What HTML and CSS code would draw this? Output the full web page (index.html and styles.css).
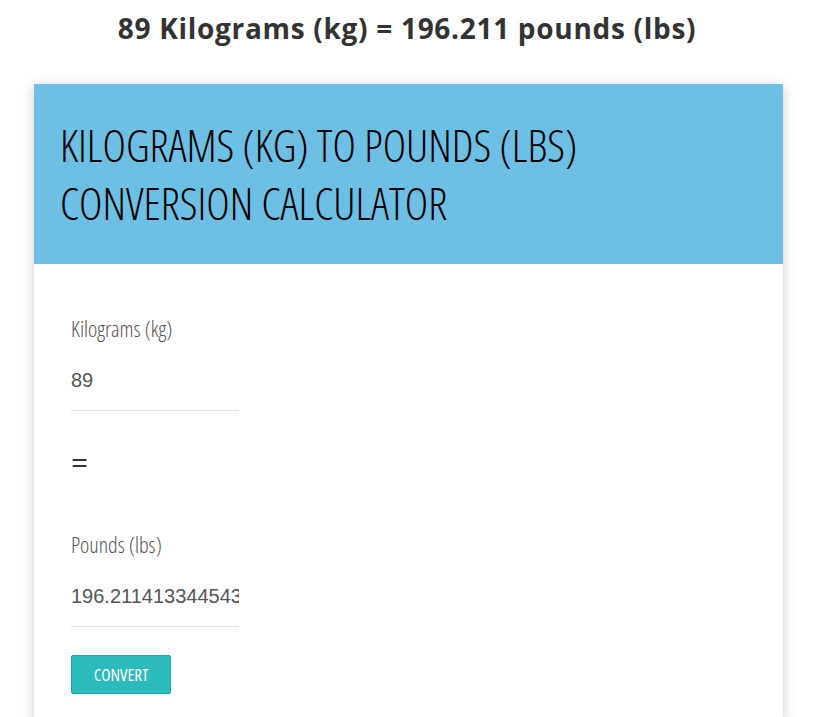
FILE: index.html
```html
<!DOCTYPE html>
<html lang="en">
<head>
  <meta charset="UTF-8">
  <meta name="viewport" content="width=device-width, initial-scale=1.0">
  <title>Kilograms to Pounds</title>
  <link rel="stylesheet" href="styles.css">
</head>
<body>
  <h2 class="result">89 Kilograms (kg) = 196.211 pounds (lbs)</h2>

  <div class="card">
    <div class="card-head">
      <h1>KILOGRAMS (KG) TO POUNDS (LBS) CONVERSION CALCULATOR</h1>
    </div>
    <div class="card-body">
      <div class="field">
        <label for="kg">Kilograms (kg)</label>
        <input id="kg" type="text" value="89">
      </div>
      <div class="equals">=</div>
      <div class="field">
        <label for="lbs">Pounds (lbs)</label>
        <input id="lbs" type="text" value="196.21141334454318">
      </div>
      <button class="btn">CONVERT</button>
    </div>
  </div>
</body>
</html>
```

FILE: styles.css
```css
body {
  margin: 0;
  background: #fff;
  font-family: "Open Sans", "Liberation Sans", sans-serif;
  color: #333;
}

.result {
  margin: 9px 0 0;
  text-align: center;
  font-family: "Open Sans", sans-serif;
  font-weight: 700;
  font-size: 28px;
  letter-spacing: 0.7px;
  line-height: 38px;
  color: #333;
}

.card {
  margin: 37px 31px 0 34px;
  background: #fff;
  box-shadow: 0 2px 12px rgba(0, 0, 0, 0.2);
}

.card-head {
  background: #6dbfe4;
  height: 180px;
  padding: 32px 26px 0;
  box-sizing: border-box;
}

.card-head h1 {
  margin: 0;
  max-width: 560px;
  font-family: "Open Sans", sans-serif;
  font-stretch: 75%;
  font-weight: 300;
  font-size: 44.5px;
  line-height: 58px;
  color: #000;
}

.card-body {
  padding: 49px 37px 30px;
}

.field label {
  display: block;
  font-family: "Open Sans", sans-serif;
  font-stretch: 75%;
  font-weight: 300;
  font-size: 22px;
  line-height: 30px;
  color: #555;
}

.field input {
  display: block;
  width: 168px;
  margin: 0;
  padding: 26px 0 18px;
  border: 0;
  border-bottom: 1px solid #ddd;
  font-family: "Liberation Sans", Arial, sans-serif;
  font-size: 20px;
  line-height: 23px;
  color: #555;
  outline: none;
}

.equals {
  margin: 36px 0 52px;
  font-family: "Open Sans", sans-serif;
  font-size: 30px;
  line-height: 30px;
  color: #333;
}

.btn {
  display: block;
  margin-top: 28px;
  width: 100px;
  height: 39px;
  background: #2bbbbb;
  border: 1px solid #26a5a5;
  border-radius: 2px;
  color: #fff;
  font-family: "Open Sans", sans-serif;
  font-stretch: 75%;
  font-weight: 400;
  font-size: 17px;
  padding: 0;
}
```
